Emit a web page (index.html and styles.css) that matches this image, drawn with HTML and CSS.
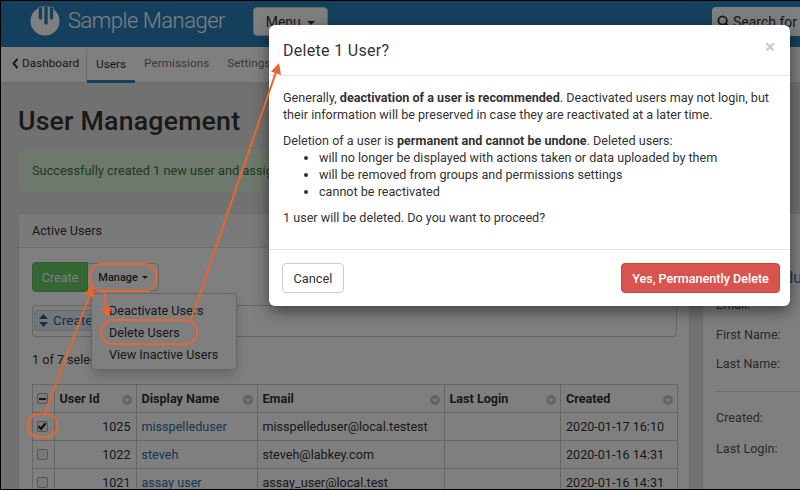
FILE: index.html
```html
<!DOCTYPE html>
<html lang="en">
<head>
<meta charset="utf-8">
<title>User Management</title>
<link rel="stylesheet" href="styles.css">
</head>
<body>
<div class="frame">
  <header class="topbar">
    <svg class="logo" viewBox="0 0 30 30" width="30" height="30" aria-hidden="true">
      <circle cx="15" cy="15" r="14.5" fill="#fff"/>
      <path d="M8.5 1v11a2 2 0 0 0 4 0V1z M14 0v17a2 2 0 0 0 4 0V0z M19.5 1v11a2 2 0 0 0 4 0V1z" fill="#2b80b9" stroke="#fff" stroke-width=".6"/>
    </svg>
    <span class="brand">Sample Manager</span>
    <button class="menu-btn">Menu <i class="caret"></i></button>
    <div class="search">
      <svg viewBox="0 0 14 14" width="14" height="14" aria-hidden="true"><circle cx="5.6" cy="5.6" r="4.2" fill="none" stroke="#333" stroke-width="1.9"/><path d="M8.8 8.8l4 4" stroke="#333" stroke-width="2.2" stroke-linecap="round"/></svg>
      <span>Search for samples</span>
    </div>
  </header>
  <nav class="subnav">
    <a class="back"><svg viewBox="0 0 7 11" width="7" height="11" aria-hidden="true"><path d="M5.5 1L1.5 5.5l4 4.5" fill="none" stroke="#333" stroke-width="2"/></svg> Dashboard</a>
    <a class="tab active">Users</a>
    <a class="tab">Permissions</a>
    <a class="tab">Settings</a>
  </nav>
  <main class="page">
    <h1>User Management</h1>
    <div class="alert">Successfully created 1 new user and assigned the selected roles.</div>
    <div class="columns">
      <section class="panel">
        <div class="panel-head">Active Users</div>
        <div class="panel-body">
          <div class="toolbar">
            <button class="btn-create">Create</button>
            <button class="btn-manage">Manage <i class="caret small"></i></button>
          </div>
          <div class="filterbar">
            <span class="chip">
              <svg viewBox="0 0 9 13" width="9" height="13" aria-hidden="true"><path d="M4.500 0L9 5H0z M4.500 13L0 8h9z" fill="#2b5f8f"/></svg>
              Created
            </span>
          </div>
          <div class="count">1 of 7 selected</div>
          <table class="grid">
            <colgroup><col class="c0"><col class="c1"><col class="c2"><col class="c3"><col class="c4"><col class="c5"></colgroup>
            <thead>
              <tr>
                <th class="chk"><span class="box part"><i></i></span></th>
                <th>User Id<i class="sort"></i></th>
                <th>Display Name<i class="sort"></i></th>
                <th>Email<i class="sort"></i></th>
                <th>Last Login<i class="sort"></i></th>
                <th>Created<i class="sort"></i></th>
              </tr>
            </thead>
            <tbody>
              <tr class="selected"><td class="chk"><span class="box on"><svg viewBox="0 0 10 10" width="10" height="10" aria-hidden="true"><path d="M1.500 5.200l2.600 2.600 4.400-5.600" fill="none" stroke="#222" stroke-width="2.200"/></svg></span></td><td class="num">1025</td><td><a>misspelleduser</a></td><td>misspelleduser@local.testest</td><td></td><td>2020-01-17 16:10</td></tr>
              <tr><td class="chk"><span class="box"></span></td><td class="num">1022</td><td><a>steveh</a></td><td>steveh@labkey.com</td><td></td><td>2020-01-16 14:31</td></tr>
              <tr><td class="chk"><span class="box"></span></td><td class="num">1021</td><td><a>assay user</a></td><td>assay_user@local.test</td><td></td><td>2020-01-16 14:31</td></tr>
            </tbody>
          </table>
        </div>
        <ul class="dropdown">
          <li>Deactivate Users</li>
          <li>Delete Users</li>
          <li>View Inactive Users</li>
        </ul>
      </section>
      <aside class="details">
        <div class="details-title">misspelleduser</div>
        <dl class="fields">
          <dt>Email:</dt>
          <dt>First Name:</dt>
          <dt>Last Name:</dt>
        </dl>
        <hr>
        <dl class="fields lower">
          <dt>Created:</dt>
          <dt>Last Login:</dt>
        </dl>
      </aside>
    </div>
  </main>

  <div class="backdrop"></div>

  <div class="modal">
    <div class="modal-head">
      <h2>Delete 1 User?</h2>
      <span class="close">×</span>
    </div>
    <div class="modal-body">
      <p>Generally, <b>deactivation of a user is recommended</b>. Deactivated users may not login, but their information will be preserved in case they are reactivated at a later time.</p>
      <p class="tight">Deletion of a user is <b>permanent and cannot be undone</b>. Deleted users:</p>
      <ul>
        <li>will no longer be displayed with actions taken or data uploaded by them</li>
        <li>will be removed from groups and permissions settings</li>
        <li>cannot be reactivated</li>
      </ul>
      <p>1 user will be deleted. Do you want to proceed?</p>
    </div>
    <div class="modal-foot">
      <button class="btn-cancel">Cancel</button>
      <button class="btn-delete">Yes, Permanently Delete</button>
    </div>
  </div>

  <svg class="notes" viewBox="0 0 800 490" width="800" height="490" aria-hidden="true">
    <g fill="none" stroke="#e8672e" stroke-width="2">
      <rect x="90" y="264" width="66" height="27" rx="12"/>
      <rect x="101" y="320" width="96" height="24" rx="12"/>
      <rect x="28" y="414" width="29" height="23" rx="10"/>
      <path d="M45 413L89 297"/>
      <path d="M104 291L106.500 310"/>
      <path d="M191 320L276 72"/>
    </g>
    <g fill="#e8672e">
      <path d="M92 286L95 298 84 294z"/>
      <path d="M107.500 318L101 308 112 307z"/>
      <path d="M279 63L281 75 271 71.500z"/>
    </g>
  </svg>
</div>
</body>
</html>
```

FILE: styles.css
```css
* { box-sizing: border-box; }
html, body { margin: 0; padding: 0; }
body { width: 800px; height: 490px; overflow: hidden; font-family: Roboto, "Liberation Sans", sans-serif; font-size: 12.600px; color: #333; }
button { font-family: inherit; }

.frame { position: relative; width: 800px; height: 490px; overflow: hidden; background: #e2e2e2; }
.frame::after { content: ""; position: absolute; inset: 0; border: 1px solid #000; border-right-width: 0; pointer-events: none; z-index: 10; }

.topbar { height: 47px; padding: 7px 0 0 30px; background: #2a80ba; display: flex; align-items: flex-start; }
.logo { flex: none; margin-top: -1px; }
.brand { margin-left: 8px; margin-top: -1px; font-size: 22px; line-height: 30px; font-weight: 300; color: #fff; letter-spacing: -.5px; white-space: nowrap; width: 185px; }
.menu-btn { width: 75px; height: 29px; padding: 0; background: #fff; border: 1px solid #ccc; border-radius: 4px; font-size: 14px; color: #333; }
.caret { display: inline-block; width: 0; height: 0; margin-left: 3px; vertical-align: middle; border-top: 4px solid #333; border-left: 4px solid transparent; border-right: 4px solid transparent; }
.caret.small { border-top-width: 3px; border-left-width: 3px; border-right-width: 3px; margin-left: 1px; }
.search { margin-left: auto; width: 88px; height: 29px; padding-left: 5px; background: #fff; border-radius: 4px 0 0 4px; display: flex; align-items: center; gap: 2px; font-size: 14px; white-space: nowrap; overflow: hidden; flex: none; }
.search svg { flex: none; }

.subnav { height: 36px; padding-left: 12px; background: #fff; border-bottom: 1px solid #ddd; display: flex; align-items: stretch; font-size: 11.800px; }
.subnav a { display: flex; align-items: center; padding-bottom: 3px; }
.subnav a.back { gap: 3px; width: 75px; border-right: 1px solid #ddd; margin-top: 2px; padding-bottom: 5px; }
.subnav a.tab { padding: 0 9px 3px; color: #777; }
.subnav a.tab.active { color: #333; border-bottom: 3px solid #2a80ba; padding-bottom: 0; margin-bottom: -1px; }

.page { padding: 21px 0 0 18px; }
h1 { margin: 0; font-size: 26.700px; line-height: 34px; font-weight: 500; color: #333; letter-spacing: .2px; }
.alert { margin-top: 10px; height: 45px; padding: 13px; margin-right: 113px; background: #dff0d8; border: 1px solid #d6e9c6; border-radius: 4px; color: #3c763d; font-size: 12.800px; line-height: 17px; white-space: nowrap; overflow: hidden; }

.columns { margin-top: 20px; display: flex; align-items: flex-start; gap: 12px; }
.panel { position: relative; width: 672px; height: 300px; background: #fff; border: 1px solid #ddd; border-radius: 4px 4px 0 0; flex: none; }
.panel-head { height: 34px; padding: 0 13px; background: #f5f5f5; border-bottom: 1px solid #ddd; line-height: 33px; border-radius: 4px 4px 0 0; }
.panel-body { padding: 14px 13px 0; }
.toolbar { display: flex; align-items: center; height: 30px; }
.btn-create { width: 56px; height: 30px; padding: 0; background: #66cc66; border: 1px solid #5cb85c; border-radius: 4px 0 0 4px; color: #fff; font-size: 12.600px; }
.btn-manage { width: 71px; height: 28px; padding: 0; background: #fff; border: 1px solid #ccc; border-left: 0; border-radius: 0 4px 4px 0; color: #333; font-size: 11px; font-weight: 500; }

.filterbar { margin-top: 13px; width: 645px; height: 32px; padding: 4px 1px; border: 1px solid #ccc; border-radius: 4px; }
.chip { display: inline-flex; align-items: center; gap: 5px; height: 21px; padding: 0 4px; background: #e6eff6; border: 1px solid #c9d9e6; border-radius: 3px; color: #2b5f8f; line-height: 1; font-size: 13.500px; }
.count { margin-top: 14px; height: 17px; line-height: 17px; }

.grid { margin-top: 16px; width: 645px; table-layout: fixed; border-collapse: collapse; }
.c0 { width: 21.500px; } .c1 { width: 82px; } .c2 { width: 121px; } .c3 { width: 187px; } .c4 { width: 116.500px; } .c5 { width: 117px; }
.grid th, .grid td { height: 28px; padding: 0 5px; border: 1px solid #ccc; white-space: nowrap; overflow: hidden; text-align: left; }
.grid th { position: relative; font-weight: 700; color: #333; background: #fff; }
.grid td.num { text-align: right; }
.grid a { color: #2a6ea8; }
.grid tr.selected td { background: #fff; }
.grid .chk { padding: 0 0 0 4px; }
.box { display: block; width: 11px; height: 11px; border: 1px solid #aaa; border-radius: 2px; background: #f4f4f4; position: relative; }
.box svg { position: absolute; left: -1px; top: -1px; }
.box.part i { position: absolute; left: 1px; top: 3.500px; width: 7px; height: 2px; background: #333; }
.sort { position: absolute; right: 4px; top: 10px; width: 10px; height: 10px; border-radius: 50%; background: #c8c8c8; }
.sort::after { content: ""; position: absolute; left: 2px; top: 4px; border-top: 3px solid #fff; border-left: 3px solid transparent; border-right: 3px solid transparent; }

.dropdown { position: absolute; left: 72px; top: 79px; width: 146px; height: 77px; margin: 0; padding: 6px 0 4px; list-style: none; background: #fff; border: 1px solid #ccc; border-radius: 4px; box-shadow: 0 6px 12px rgba(0,0,0,.18); }
.dropdown li { height: 22px; line-height: 22px; padding-left: 17px; white-space: nowrap; }

.details { width: 100px; height: 300px; flex: none; background: #fff; border: 1px solid #ddd; padding: 52px 0 0 13px; white-space: nowrap; color: #555; }
.details-title { font-size: 16px; color: #2a80ba; height: 23px; line-height: 23px; margin-bottom: 7px; }
.fields { margin: 0; }
.fields dt { height: 29.500px; line-height: 17px; }
.fields.lower dt { height: 31px; }
.details hr { margin: 6px 0 17px; border: 0; border-top: 1px solid #ddd; }

.backdrop { position: absolute; inset: 0; background: rgba(0,0,0,.5); }

.modal { position: absolute; left: 269px; top: 25px; width: 521px; height: 281px; background: #fff; border-radius: 6px; box-shadow: 0 5px 15px rgba(0,0,0,.5); display: flex; flex-direction: column; }
.modal-head { height: 51px; padding: 0 14px; border-bottom: 1px solid #e5e5e5; display: flex; align-items: center; justify-content: space-between; flex: none; }
h2 { margin: 0; font-size: 16px; font-weight: 400; color: #333; letter-spacing: .3px; }
.close { font-size: 19px; font-weight: 700; color: #000; opacity: .2; line-height: 1; margin-top: -8px; margin-right: 1px; }
.modal-body { flex: 1; padding: 13px 14px 0; line-height: 17px; border-bottom: 1px solid #e5e5e5; }
.modal-body p { margin: 0 0 9px; }
.modal-body p.tight { margin: 0; }
.modal-body ul { margin: 0 0 9px; padding-left: 36px; }
.modal-foot { height: 56px; padding: 13px 10px 0 13px; display: flex; justify-content: space-between; align-items: flex-start; flex: none; }
.btn-cancel { width: 62px; height: 30px; padding: 0; background: #fff; border: 1px solid #ccc; border-radius: 4px; color: #333; font-size: 12.800px; }
.btn-delete { width: 159px; height: 30px; padding: 0; background: #d9534f; border: 1px solid #d43f3a; border-radius: 4px; color: #fff; font-size: 12.600px; font-weight: 500; }

.notes { position: absolute; left: 0; top: 0; pointer-events: none; }
```
